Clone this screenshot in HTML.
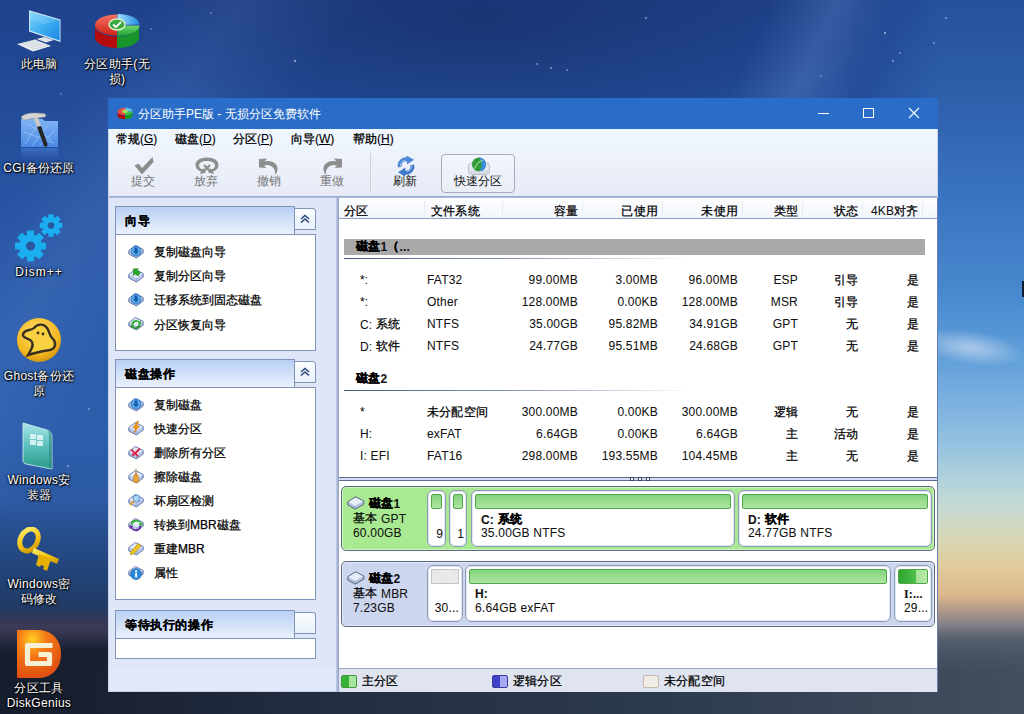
<!DOCTYPE html>
<html><head><meta charset="utf-8">
<style>
*{margin:0;padding:0;box-sizing:border-box}
html,body{width:1024px;height:714px;overflow:hidden}
body{position:relative;font-family:"Liberation Sans",sans-serif;font-size:12px;color:#111;
background:#1f3f7e}
.a{position:absolute}
#bg{left:0;top:0;width:1024px;height:714px;
background:
 radial-gradient(ellipse 380px 140px at 480px 20px,rgba(12,22,60,.32),rgba(12,22,60,0)),
 linear-gradient(115deg,rgba(120,160,230,0) 0,rgba(120,160,230,0) 700px,rgba(140,180,240,.22) 760px,rgba(120,160,230,0) 820px),
 linear-gradient(125deg,rgba(120,160,230,0) 0,rgba(120,160,230,0) 120px,rgba(130,170,240,.12) 200px,rgba(120,160,230,0) 300px),
 linear-gradient(180deg,#1f428c 0,#25509e 150px,#2a5aa8 300px,#2c5eac 430px,#2c5aa4 500px,#264c8a 540px,#214274 580px,#233a64 608px,#34385a 620px,#3c3a54 628px,#2c3046 638px,#1a2032 650px,#161d2c 714px);}
#bgr{left:850px;top:0;width:174px;height:714px;
-webkit-mask-image:linear-gradient(90deg,transparent 0,#000 88px);
background:linear-gradient(180deg,#25509c 0,#2d5eaa 90px,#3a74c0 200px,#4a8ad0 300px,#62a0da 360px,#7ab0e0 400px,#94c2e0 444px,#b2d2dc 480px,#c8dad0 510px,#d8d6b4 540px,#e0cc9c 565px,#dcb88c 595px,#b09a88 610px,#828088 625px,#56606e 638px,#4c5a6a 650px,#44525f 680px,#3a4854 714px)}
#bgb{left:0;top:645px;width:1024px;height:69px;-webkit-mask-image:linear-gradient(180deg,transparent 0,#000 30px);background:linear-gradient(90deg,#161d2c 0,#1a2232 110px,#222c40 300px,#2c3a4e 650px,#3a4858 900px,#424f5c 1024px)}
.dt{position:absolute;width:80px;text-align:center;color:#fff;font-size:12px;line-height:15px;letter-spacing:.3px;
text-shadow:1px 1px 1px #000,0 0 3px #000,0 0 2px #000}
#win{left:108px;top:98px;width:830px;height:594px;background:#e2e8f8;border:1px solid #c8d4ea}
#title{left:108px;top:98px;width:830px;height:31px;background:#2a6dc9}
#ttext{left:138px;top:106px;color:#fff;font-size:12px;white-space:nowrap}
#menu{left:109px;top:129px;width:828px;height:21px;background:#eef5fc}
.mi{position:absolute;top:131px;font-size:12px;white-space:nowrap;color:#000;-webkit-text-stroke:.1px #000}
#tb{left:109px;top:150px;width:828px;height:46px;background:linear-gradient(180deg,#eef3fb,#e6ebf7)}
#tbline{left:109px;top:196px;width:828px;height:2px;background:linear-gradient(180deg,#8ea6cc,#b4c4dc)}
.tl{position:absolute;top:173px;font-size:12px;color:#777;white-space:nowrap}
#left{left:109px;top:198px;width:228px;height:470px;background:#dfe6f8}
#vdiv{left:336px;top:198px;width:3px;height:494px;background:linear-gradient(90deg,#c5cde6,#8f9fc3)}
.pnl{position:absolute;left:115px;width:201px;background:#fffffd;border:1px solid #8094b8}
.ph{position:absolute;left:115px;width:180px;height:29px;border:1px solid #8094b8;border-bottom:none;
background:linear-gradient(180deg,#b9d0f5 0,#cfdff8 45%,#edf3fd 100%)}
.phb{position:absolute;left:294px;width:22px;height:22px;border:1px solid #8094b8;border-radius:0 3px 0 0;background:linear-gradient(180deg,#fbfdff,#e8f1fb)}
.pt{position:absolute;left:125px;font-weight:bold;font-size:12px;letter-spacing:.6px;color:#000;-webkit-text-stroke:.15px #000}
.it{position:absolute;left:154px;font-size:12px;white-space:nowrap;color:#000;-webkit-text-stroke:.25px #000}
.ic{position:absolute;left:128px;width:16px;height:16px}
#right{left:339px;top:198px;width:598px;height:470px;background:#fff}
#hdr{left:339px;top:198px;width:598px;height:21px;background:linear-gradient(180deg,#fdfdfe,#f2f5fb);border-bottom:1px solid #8ea2c8}
.hs{position:absolute;top:201px;width:2px;height:17px;background:linear-gradient(90deg,#dfe5ef,#fff)}
.h{position:absolute;top:203px;font-size:12px;white-space:nowrap;color:#111;-webkit-text-stroke:.05px #000;letter-spacing:.2px}
.c{position:absolute;font-size:12px;white-space:nowrap;color:#111;-webkit-text-stroke:.05px #000;letter-spacing:.2px}
.r{text-align:right}
#status{left:339px;top:668px;width:598px;height:24px;background:#dfe4f0;border-top:1px solid #90a4c8}
.dk{position:absolute;border:1px solid #5c6a80;border-radius:5px;box-shadow:inset 0 0 0 1px rgba(255,255,255,.45)}
.pb{position:absolute;background:#fff;border:1px solid #8e9ab4;border-radius:6px;box-shadow:inset 0 0 0 1px #dfe8f6}
.gb{position:absolute;left:3px;right:3px;top:3px;height:15px;border:1px solid #4ea84a;border-radius:2px;background:linear-gradient(180deg,#84d47e,#b0e4a2)}
.ub{position:absolute;left:3px;right:3px;top:3px;height:15px;border:1px solid #c4c4c4;background:repeating-linear-gradient(45deg,#e2e2e2 0,#e2e2e2 1px,#ececec 1px,#ececec 3px)}
.hd{position:absolute;width:16px;height:14px}
.h .k{top:0 !important}
.k{-webkit-text-stroke:.25px #000;color:#000;position:relative;top:-1px}
.km{-webkit-text-stroke:.3px #000}
</style></head><body>
<div id="bg" class="a"></div>
<div id="bgr" class="a"></div>
<div id="bgb" class="a"></div>
<div class="a" style="left:294px;top:60px;width:2px;height:2px;border-radius:50%;background:rgba(255,255,255,0.63)"></div><div class="a" style="left:536px;top:63px;width:1.5px;height:1.5px;border-radius:50%;background:rgba(255,255,255,0.42)"></div><div class="a" style="left:550px;top:67px;width:1.5px;height:1.5px;border-radius:50%;background:rgba(255,255,255,0.42)"></div><div class="a" style="left:566px;top:69px;width:1.5px;height:1.5px;border-radius:50%;background:rgba(255,255,255,0.35)"></div><div class="a" style="left:645px;top:17px;width:1.5px;height:1.5px;border-radius:50%;background:rgba(255,255,255,0.42)"></div><div class="a" style="left:884px;top:32px;width:2px;height:2px;border-radius:50%;background:rgba(255,255,255,0.63)"></div><div class="a" style="left:892px;top:60px;width:1.5px;height:1.5px;border-radius:50%;background:rgba(255,255,255,0.42)"></div><div class="a" style="left:899px;top:52px;width:1.5px;height:1.5px;border-radius:50%;background:rgba(255,255,255,0.35)"></div><div class="a" style="left:945px;top:17px;width:1.5px;height:1.5px;border-radius:50%;background:rgba(255,255,255,0.42)"></div><div class="a" style="left:933px;top:42px;width:1.5px;height:1.5px;border-radius:50%;background:rgba(255,255,255,0.35)"></div><div class="a" style="left:820px;top:75px;width:1.5px;height:1.5px;border-radius:50%;background:rgba(255,255,255,0.28)"></div><div class="a" style="left:60px;top:93px;width:1.5px;height:1.5px;border-radius:50%;background:rgba(255,255,255,0.28)"></div><div class="a" style="left:150px;top:28px;width:1.5px;height:1.5px;border-radius:50%;background:rgba(255,255,255,0.28)"></div><div class="a" style="left:210px;top:12px;width:1.5px;height:1.5px;border-radius:50%;background:rgba(255,255,255,0.28)"></div><div class="a" style="left:35px;top:272px;width:1.5px;height:1.5px;border-radius:50%;background:rgba(255,255,255,0.28)"></div><div class="a" style="left:88px;top:408px;width:1.5px;height:1.5px;border-radius:50%;background:rgba(255,255,255,0.35)"></div><div class="a" style="left:67px;top:465px;width:1.5px;height:1.5px;border-radius:50%;background:rgba(255,255,255,0.42)"></div><div class="a" style="left:50px;top:640px;width:1.5px;height:1.5px;border-radius:50%;background:rgba(255,255,255,0.28)"></div>
<div class="a" style="left:925px;top:325px;width:110px;height:50px;background:radial-gradient(ellipse 55px 17px at 45px 24px,rgba(225,232,245,.6),rgba(225,232,245,0));transform:rotate(8deg)"></div>
<div class="a" style="left:1022px;top:281px;width:2px;height:16px;background:#101a30"></div>

<!-- desktop icons -->
<svg class="a" style="left:14px;top:8px" width="50" height="46" viewBox="0 0 50 46">
<defs><linearGradient id="scr" x1="0" y1="0" x2="1" y2="1"><stop offset="0" stop-color="#7ad4fa"/><stop offset=".55" stop-color="#3aaaf0"/><stop offset="1" stop-color="#1a88e0"/></linearGradient></defs>
<path d="M15 2.2 L46.5 11.5 L46.5 34 L15 23.5 Z" fill="#d8ecf8"/>
<path d="M15.8 3.5 L45.7 12.3 L45.7 32.6 L15.8 22.5 Z" fill="url(#scr)"/>
<path d="M15.8 3.5 L45.7 12.3 L30 16 L15.8 12 Z" fill="#ffffff" opacity=".12"/>
<path d="M22.5 31 L30 29 L40 32 L32 34.5 Z" fill="#dfe4e8"/>
<path d="M3 36 L21 31.5 L37 38 L19 43.5 Z" fill="#eef2f4"/>
<path d="M6 36 L22 32 M9 37.3 L25 33.3 M12 38.6 L28 34.6 M15 40 L31 36 M18 41.4 L34 37.4" stroke="#b0bac4" stroke-width=".6"/>
</svg>
<svg class="a" style="left:94px;top:12px" width="46" height="38" viewBox="0 0 46 38">
<defs>
<linearGradient id="pr" x1="0" y1="0" x2="0" y2="1"><stop offset="0" stop-color="#f47060"/><stop offset="1" stop-color="#d02418"/></linearGradient>
<linearGradient id="pg" x1="0" y1="0" x2="0" y2="1"><stop offset="0" stop-color="#70d870"/><stop offset="1" stop-color="#20a030"/></linearGradient>
<linearGradient id="pbl" x1="0" y1="0" x2="1" y2="0"><stop offset="0" stop-color="#a0e0ff"/><stop offset="1" stop-color="#2088e0"/></linearGradient>
</defs>
<path d="M1 14 A22 10.5 0 0 0 23 24.5 L23 36 A22 10.5 0 0 1 1 25.5 Z" fill="#b40c0c"/>
<path d="M23 24.5 A22 10.5 0 0 0 45 14 L45 25.5 A22 10.5 0 0 1 23 36 Z" fill="#18962a"/>
<path d="M23 13 L23 2.5 A22 10.5 0 0 0 1 13 A22 10.5 0 0 0 23 23.5 Z" fill="url(#pr)"/>
<path d="M23.5 13 L23.5 2 A22 10.5 0 0 1 45.5 12.5 Z" fill="url(#pbl)"/>
<path d="M23.5 13.5 L45.5 13.5 A22 10.5 0 0 1 23.5 24 Z" fill="url(#pg)"/>
<ellipse cx="23" cy="12.5" rx="8" ry="5.5" fill="#3aa83a" stroke="#e0f4d0" stroke-width="1.3"/>
<path d="M19 12.5 L22 15 L27 10" stroke="#fff" stroke-width="1.8" fill="none"/>
</svg>
<svg class="a" style="left:18px;top:110px" width="44" height="50" viewBox="0 0 44 50">
<defs><linearGradient id="cg" x1="0" y1="0" x2="0" y2="1"><stop offset="0" stop-color="#80b4f4"/><stop offset="1" stop-color="#4a88e4"/></linearGradient>
<linearGradient id="cr" x1="0" y1="0" x2="0" y2="1"><stop offset="0" stop-color="#4a86e0" stop-opacity=".5"/><stop offset="1" stop-color="#4a86e0" stop-opacity="0"/></linearGradient></defs>
<path d="M3 9 L24 9 L27 11 L40 11 L40 37 L3 37 Z" fill="url(#cg)"/>
<path d="M7 34 L20 14 M14 36 L30 15 M22 35 L37 20 M6 22 L36 33 M10 14 L34 30" stroke="#c0dafa" stroke-width=".6" opacity=".8"/>
<rect x="3" y="38" width="37" height="12" fill="url(#cr)"/>
<path d="M3 7 C6 4 12 2.5 18 3 L26 3.5 C28 4 28.5 6 27 7 L20 8 C15 8.5 11 9 8 10 C6 10.5 4 9 3 7 Z" fill="#d4d4d4" stroke="#8a8a8a" stroke-width=".5"/>
<path d="M15.5 8.5 L20 7.5 L23 16 L19 17 Z" fill="#c8c8c8"/>
<path d="M19 17 L23 16 L29.5 34 C30 36.5 27.5 37.5 26 36 Z" fill="#262626"/>
</svg>
<svg class="a" style="left:13px;top:212px" width="52" height="50" viewBox="0 0 52 50">
<g fill="#1aaef0">
<g transform="translate(17.5 34)">
<circle r="11.5"/>
<rect x="-3.6" y="-15.5" width="7.2" height="31" rx="1"/>
<rect x="-3.6" y="-15.5" width="7.2" height="31" rx="1" transform="rotate(45)"/>
<rect x="-3.6" y="-15.5" width="7.2" height="31" rx="1" transform="rotate(90)"/>
<rect x="-3.6" y="-15.5" width="7.2" height="31" rx="1" transform="rotate(135)"/>
</g>
<g transform="translate(38 13.5)">
<circle r="8.5"/>
<rect x="-2.7" y="-11.3" width="5.4" height="22.6" rx=".8"/>
<rect x="-2.7" y="-11.3" width="5.4" height="22.6" rx=".8" transform="rotate(45)"/>
<rect x="-2.7" y="-11.3" width="5.4" height="22.6" rx=".8" transform="rotate(90)"/>
<rect x="-2.7" y="-11.3" width="5.4" height="22.6" rx=".8" transform="rotate(135)"/>
</g>
</g>
<circle cx="17.5" cy="34" r="4.5" fill="#2a56a0"/>
<circle cx="38" cy="13.5" r="3.3" fill="#2a56a0"/>
</svg>
<svg class="a" style="left:16px;top:317px" width="46" height="46" viewBox="0 0 46 46">
<defs><radialGradient id="gy" cx=".45" cy=".35" r=".7"><stop offset="0" stop-color="#ffe070"/><stop offset=".7" stop-color="#f4b820"/><stop offset="1" stop-color="#c88a10"/></radialGradient></defs>
<circle cx="23" cy="23" r="22" fill="url(#gy)"/>
<path d="M7 17 C9 12 15 14 18 11 C21 7 28 6 31 11 C34 15 33 19 37 22 C41 26 39 32 34 33 C28 34 21 35 12 38 C15 33 18 29 16 25 C14 21 6 22 7 17 Z" fill="#f8d040" stroke="#3a3020" stroke-width="2.4"/>
<circle cx="22" cy="16" r="1.4" fill="#3a3020"/><circle cx="27" cy="17" r="1.4" fill="#3a3020"/>
</svg>
<svg class="a" style="left:21px;top:421px" width="34" height="50" viewBox="0 0 34 50">
<defs><linearGradient id="wi" x1="0" y1="0" x2="0" y2="1"><stop offset="0" stop-color="#a8e4e8"/><stop offset=".5" stop-color="#5cc0bc"/><stop offset="1" stop-color="#2a9a8a"/></linearGradient></defs>
<path d="M2 2 L26 9 C29 10 31 12 31 15 L31 48 L5 43 C3 42.5 2 41 2 39 Z" fill="url(#wi)" stroke="#d8f4f4" stroke-width=".8"/>
<path d="M26 9 C29 10 31 12 31 15 L31 48 L28 47 L28 14 C28 12 27.5 10 26 9Z" fill="#2a8880" opacity=".6"/>
<g fill="#e4f6f6" opacity=".85"><rect x="9" y="13" width="6" height="5"/><rect x="16" y="14" width="6" height="5"/><rect x="9" y="19" width="6" height="5"/><rect x="16" y="20" width="6" height="5"/></g>
</svg>
<svg class="a" style="left:17px;top:527px" width="45" height="46" viewBox="0 0 45 46">
<defs><linearGradient id="ky" x1="0" y1="0" x2="1" y2="1"><stop offset="0" stop-color="#fff070"/><stop offset=".6" stop-color="#f0c010"/><stop offset="1" stop-color="#c89000"/></linearGradient></defs>
<g transform="rotate(28 12 13)"><ellipse cx="12" cy="13" rx="8.5" ry="11.5" fill="none" stroke="url(#ky)" stroke-width="5"/></g>
<path d="M17 21 L42 32 L40 37 L15 26 Z" fill="url(#ky)"/>
<path d="M22 27 L34 32 L30 44 L26 42 L27 39 L24 38 L23 40 L19 38 Z" fill="#e8b000"/>
</svg>
<svg class="a" style="left:16px;top:629px" width="46" height="50" viewBox="0 0 46 50">
<defs><radialGradient id="dg" cx=".35" cy=".2" r=".8"><stop offset="0" stop-color="#ffd020"/><stop offset=".4" stop-color="#f47a18"/><stop offset="1" stop-color="#e05010"/></radialGradient></defs>
<path d="M1 1 L22 1 C36 1 45 11 45 25 C45 39 36 49 22 49 L1 49 Z" fill="url(#dg)"/>
<path d="M36.5 16.5 L11.5 16.5 L11.5 34.5 L33.5 34.5 L33.5 25.5 L22.5 25.5" stroke="#f8f0d4" stroke-width="5.2" stroke-linejoin="round" fill="none"/>
</svg>
<!-- desktop icons text -->
<div class="dt" style="left:-1px;top:57px">此电脑</div>
<div class="dt" style="left:77px;top:57px">分区助手(无<br>损)</div>
<div class="dt" style="left:-1px;top:161px">CGI备份还原</div>
<div class="dt" style="left:-1px;top:265px;letter-spacing:1px">Dism++</div>
<div class="dt" style="left:-1px;top:369px">Ghost备份还<br>原</div>
<div class="dt" style="left:-1px;top:473px">Windows安<br>装器</div>
<div class="dt" style="left:-1px;top:577px">Windows密<br>码修改</div>
<div class="dt" style="left:-1px;top:681px">分区工具<br>DiskGenius</div>

<div id="win" class="a"></div>
<div id="title" class="a"></div>
<div id="ttext" class="a">分区助手PE版 - 无损分区免费软件</div>
<!-- title controls -->
<div class="a" style="left:818px;top:113px;width:11px;height:1px;background:#fff"></div>
<div class="a" style="left:863px;top:108px;width:11px;height:10px;border:1px solid #fff"></div>
<svg class="a" style="left:908px;top:107px" width="12" height="12" viewBox="0 0 12 12"><path d="M1 1L11 11M11 1L1 11" stroke="#fff" stroke-width="1.1"/></svg>
<!-- title icon -->
<svg class="a" style="left:117px;top:107px" width="16" height="13" viewBox="0 0 46 38">
<path d="M1 14 A22 10.5 0 0 0 23 24.5 L23 36 A22 10.5 0 0 1 1 25.5 Z" fill="#b40c0c"/>
<path d="M23 24.5 A22 10.5 0 0 0 45 14 L45 25.5 A22 10.5 0 0 1 23 36 Z" fill="#18962a"/>
<path d="M23 13 L23 2.5 A22 10.5 0 0 0 1 13 A22 10.5 0 0 0 23 23.5 Z" fill="#e84a3c"/>
<path d="M23.5 13 L23.5 2 A22 10.5 0 0 1 45.5 12.5 Z" fill="#60c0f0"/>
<path d="M23.5 13.5 L45.5 13.5 A22 10.5 0 0 1 23.5 24 Z" fill="#40c048"/>
<ellipse cx="23" cy="12.5" rx="8" ry="5.5" fill="#a8e060"/>
</svg>
<div id="menu" class="a"></div>
<div class="mi" style="left:116px"><span class="km">常规</span>(<u>G</u>)</div>
<div class="mi" style="left:175px"><span class="km">磁盘</span>(<u>D</u>)</div>
<div class="mi" style="left:233px"><span class="km">分区</span>(<u>P</u>)</div>
<div class="mi" style="left:291px"><span class="km">向导</span>(<u>W</u>)</div>
<div class="mi" style="left:353px"><span class="km">帮助</span>(<u>H</u>)</div>
<div id="tb" class="a"></div>
<div id="tbline" class="a"></div>
<!-- toolbar icons -->
<svg class="a" style="left:133px;top:156px" width="22" height="20" viewBox="0 0 22 20">
<path d="M1.5 9.5 L5.5 7.5 L9 12 L19.5 1 L20.5 6 L9 18.5 Z" fill="#8c8c8c"/>
</svg>
<svg class="a" style="left:194px;top:156px" width="26" height="19" viewBox="0 0 26 19">
<path d="M13 1.5 C6 1.5 1.5 4.5 1.5 9 C1.5 12 3.5 14.5 7 15.5 L6 18 L12 16.5 L9.5 12 L8.5 13.5 C6 12.5 5 11 5 9.5 C5 6.5 8.5 5 13 5 C17.5 5 21 6.5 21 9.5 C21 11 20 12.5 17.5 13.5 L16.5 12 L14 16.5 L20 18 L19 15.5 C22.5 14.5 24.5 12 24.5 9 C24.5 4.5 20 1.5 13 1.5 Z" fill="#8e8e8e"/>
<path d="M10 9 L16 15 M16 9 L10 15" stroke="#8e8e8e" stroke-width="2.2"/>
</svg>
<svg class="a" style="left:258px;top:157px" width="22" height="19" viewBox="0 0 22 19">
<path d="M1 2 L9 1.5 L6.5 4.5 C13 3 19 6 19.5 11 C19.8 14 18.5 16.5 17 18 C17.5 15.5 17 11.5 13 9 C10.5 7.5 8 8 6 8.8 L8.5 11 L1 10.5 Z" fill="#8e8e8e"/>
</svg>
<svg class="a" style="left:321px;top:157px" width="22" height="19" viewBox="0 0 22 19">
<path d="M21 2 L13 1.5 L15.5 4.5 C9 3 3 6 2.5 11 C2.2 14 3.5 16.5 5 18 C4.5 15.5 5 11.5 9 9 C11.5 7.5 14 8 16 8.8 L13.5 11 L21 10.5 Z" fill="#8e8e8e"/>
</svg>
<div class="a" style="left:370px;top:153px;width:2px;height:39px;background:linear-gradient(90deg,#b9c3d3,#fff)"></div>
<svg class="a" style="left:396px;top:156px" width="20" height="20" viewBox="0 0 20 20">
<path d="M3.8 11 A6.3 6.3 0 0 1 12 3.6" stroke="#4f8ad8" stroke-width="4" fill="none"/>
<path d="M10.5 -0.5 L18 3.8 L11 8.5 Z" fill="#4f8ad8"/>
<path d="M16.2 9 A6.3 6.3 0 0 1 8 16.4" stroke="#3f78c8" stroke-width="4" fill="none"/>
<path d="M9.5 11.5 L2 16.2 L9 20.5 Z" fill="#3f78c8"/>
<path d="M4.5 10 A5.5 5.5 0 0 1 9 4.5 M15.5 10 A5.5 5.5 0 0 1 11 15.5" stroke="#a8ccf4" stroke-width="1" fill="none"/>
</svg>
<div class="a" style="left:441px;top:154px;width:74px;height:39px;border:1px solid #a4adbd;border-radius:4px;background:linear-gradient(180deg,#f3f5fb,#e9edf6)"></div>
<svg class="a" style="left:467px;top:156px" width="24" height="20" viewBox="0 0 24 20">
<path d="M1.5 10 Q1.5 7 4.5 7 L19.5 7 Q22.5 7 22.5 10 L22.5 15.5 Q22.5 18.5 19.5 18.5 L4.5 18.5 Q1.5 18.5 1.5 15.5 Z" fill="#e4e8ee" stroke="#b8bfca" stroke-width="1"/>
<circle cx="12" cy="8.5" r="7" fill="#2e9a38"/>
<path d="M12 1.5 A7 7 0 0 1 19 8.5 A7 7 0 0 1 12 15.5 C16 12 15 5 12 1.5Z" fill="#3a90e0"/>
<path d="M7.5 13 Q10 6 16 4" stroke="#9ad880" stroke-width="1.2" fill="none"/>
<path d="M2 14 Q12 17 22 14 L22 15.5 Q22 18 19.5 18 L4.5 18 Q2 18 2 15.5 Z" fill="#d4d9e2"/>
</svg>
<div class="tl" style="left:131px">提交</div>
<div class="tl" style="left:194px">放弃</div>
<div class="tl" style="left:257px">撤销</div>
<div class="tl" style="left:320px">重做</div>
<div class="tl" style="left:393px;color:#111">刷新</div>
<div class="tl" style="left:454px;color:#111">快速分区</div>

<div id="left" class="a"></div>
<div id="right" class="a"></div>
<div id="vdiv" class="a"></div>

<!-- panel 1 -->
<div class="ph" style="top:206px"></div>
<div class="phb" style="top:208px"></div>
<div class="pnl" style="top:234px;height:117px"></div>
<div class="pt" style="top:213px">向导</div>
<div class="it" style="top:244px">复制磁盘向导</div>
<div class="it" style="top:268px">复制分区向导</div>
<div class="it" style="top:292px">迁移系统到固态磁盘</div>
<div class="it" style="top:317px">分区恢复向导</div>

<!-- panel 2 -->
<div class="ph" style="top:359px"></div>
<div class="phb" style="top:361px"></div>
<div class="pnl" style="top:387px;height:213px"></div>
<div class="pt" style="top:366px">磁盘操作</div>
<div class="it" style="top:397px">复制磁盘</div>
<div class="it" style="top:421px">快速分区</div>
<div class="it" style="top:445px">删除所有分区</div>
<div class="it" style="top:469px">擦除磁盘</div>
<div class="it" style="top:493px">坏扇区检测</div>
<div class="it" style="top:517px">转换到MBR磁盘</div>
<div class="it" style="top:541px">重建MBR</div>
<div class="it" style="top:565px">属性</div>

<!-- panel 3 -->
<div class="ph" style="top:610px"></div>
<div class="phb" style="top:612px"></div>
<div class="pnl" style="top:638px;height:21px"></div>
<div class="pt" style="top:617px">等待执行的操作</div>

<svg width="0" height="0" style="position:absolute">
<defs>
<g id="dsk">
<path d="M0.8 7.5 L7.5 2.5 L15.2 6.5 L15.2 10 L8.5 15 L0.8 11 Z" fill="#b4c4e6" stroke="#6a7cb0" stroke-width="1"/>
<path d="M1.4 7.6 L7.5 3.2 L14.6 6.7 L8.5 11.2 Z" fill="#e4ecfa"/>
<path d="M8.5 11.2 L8.5 14.4" stroke="#8a9ccc" stroke-width=".7"/>
</g>
</defs></svg>
<svg class="a" style="left:128px;top:243px" width="16" height="16" viewBox="0 0 16 16"><use href="#dsk"/><circle cx="8" cy="8" r="5" fill="#5aa8e8" stroke="#2a70c0" stroke-width=".8"/><path d="M6.5 4.5 L9.5 4.5 L9.5 8 L11 8 L8 11.5 L5 8 L6.5 8 Z" fill="#1a5cb0"/></svg>
<svg class="a" style="left:128px;top:267px" width="16" height="16" viewBox="0 0 16 16"><use href="#dsk"/><path d="M4 4 L8 1 L8 3 L12 3 L12 7 L8 7 L8 9.5 Z" fill="#2aa82a" stroke="#167a16" stroke-width=".5" transform="rotate(35 8 5)"/></svg>
<svg class="a" style="left:128px;top:291px" width="16" height="16" viewBox="0 0 16 16"><use href="#dsk"/><circle cx="8" cy="8" r="5" fill="#5aa8e8" stroke="#2a70c0" stroke-width=".8"/><path d="M6.5 4.5 L9.5 4.5 L9.5 8 L11 8 L8 11.5 L5 8 L6.5 8 Z" fill="#1a5cb0"/></svg>
<svg class="a" style="left:128px;top:315px" width="16" height="16" viewBox="0 0 16 16"><use href="#dsk"/><path d="M3.5 9 A4.5 4 0 0 1 11.5 6.5 L13 5.5 L13 9.5 L9.5 8.5 L10.8 7.8 A3 2.7 0 0 0 5.5 9.5 Z" fill="#34b034"/><path d="M12.5 10 A4.5 4 0 0 1 4.5 12.5 L3 13.5 L3 9.5 L6.5 10.5 L5.2 11.2 A3 2.7 0 0 0 10.5 9.5 Z" fill="#2a9a2a"/></svg>
<svg class="a" style="left:128px;top:396px" width="16" height="16" viewBox="0 0 16 16"><use href="#dsk"/><circle cx="8" cy="8" r="5" fill="#5aa8e8" stroke="#2a70c0" stroke-width=".8"/><path d="M6.5 4.5 L9.5 4.5 L9.5 8 L11 8 L8 11.5 L5 8 L6.5 8 Z" fill="#1a5cb0"/></svg>
<svg class="a" style="left:128px;top:420px" width="16" height="16" viewBox="0 0 16 16"><use href="#dsk"/><path d="M9.5 1 L5 8 L8 8 L6 13 L11.5 6 L8.5 6 L10.5 1 Z" fill="#f5a010" stroke="#c86a00" stroke-width=".6"/></svg>
<svg class="a" style="left:128px;top:444px" width="16" height="16" viewBox="0 0 16 16"><use href="#dsk"/><path d="M4 5 L7 8 L11 4 L12.5 5.5 L8.5 9.5 L11 12 L9.5 13 L7 10.5 L5 12.5 L3.5 11 L5.5 9 L2.5 6.5 Z" fill="#e0204a"/></svg>
<svg class="a" style="left:128px;top:468px" width="16" height="16" viewBox="0 0 16 16"><use href="#dsk"/><path d="M7.5 0.5 L8.5 0.5 L9 7 L7 7 Z" fill="#c89850"/><path d="M6 7 L10 7 L11 14 L5 14 Z" fill="#e8a838" stroke="#b07010" stroke-width=".5"/></svg>
<svg class="a" style="left:128px;top:492px" width="16" height="16" viewBox="0 0 16 16"><use href="#dsk"/><circle cx="8.5" cy="6.5" r="3.5" fill="#a8d4f4" stroke="#5a8ac8" stroke-width="1"/><path d="M6 9 L2 13" stroke="#e8a030" stroke-width="1.8"/></svg>
<svg class="a" style="left:128px;top:516px" width="16" height="16" viewBox="0 0 16 16"><use href="#dsk"/><path d="M3 8.5 A5 4 0 0 1 13 7 L14.5 6 L14 10 L10.5 8.8 L12 8 A3.5 2.8 0 0 0 5 9 Z" fill="#34b034"/><path d="M13 10 A5 4 0 0 1 3 12 L1.5 13 L2 9 L5.5 10.2 L4 11 A3.5 2.8 0 0 0 11 10 Z" fill="#6a2aa0"/></svg>
<svg class="a" style="left:128px;top:540px" width="16" height="16" viewBox="0 0 16 16"><use href="#dsk"/><path d="M3 11.5 L10.5 3.5 L13 6 L5.5 14 L2.5 14.5 Z" fill="#f0c820" stroke="#a88000" stroke-width=".7"/></svg>
<svg class="a" style="left:128px;top:564px" width="16" height="16" viewBox="0 0 16 16"><use href="#dsk"/><circle cx="8" cy="10" r="5.5" fill="#2a88d8" stroke="#1a60b0" stroke-width=".6"/><rect x="7.2" y="9" width="1.8" height="4.5" fill="#fff"/><circle cx="8.1" cy="7.3" r="1.1" fill="#fff"/></svg>
<svg class="a" style="left:299px;top:214px" width="12" height="10" viewBox="0 0 12 10"><path d="M2 5 L6 1.5 L10 5 M2 8.5 L6 5 L10 8.5" stroke="#2a4a78" stroke-width="1.6" fill="none"/></svg>
<svg class="a" style="left:299px;top:367px" width="12" height="10" viewBox="0 0 12 10"><path d="M2 5 L6 1.5 L10 5 M2 8.5 L6 5 L10 8.5" stroke="#2a4a78" stroke-width="1.6" fill="none"/></svg>
<!-- list header -->
<div id="hdr" class="a"></div>
<div class="hs" style="left:424px"></div><div class="hs" style="left:502px"></div><div class="hs" style="left:582px"></div><div class="hs" style="left:662px"></div><div class="hs" style="left:742px"></div><div class="hs" style="left:802px"></div><div class="hs" style="left:862px"></div><div class="hs" style="left:922px"></div>
<div class="h" style="left:344px"><span class="k">分区</span></div>
<div class="h" style="left:431px"><span class="k">文件系统</span></div>
<div class="h r" style="left:500px;width:78px"><span class="k">容量</span></div>
<div class="h r" style="left:580px;width:78px"><span class="k">已使用</span></div>
<div class="h r" style="left:660px;width:78px"><span class="k">未使用</span></div>
<div class="h r" style="left:740px;width:58px"><span class="k">类型</span></div>
<div class="h r" style="left:800px;width:58px"><span class="k">状态</span></div>
<div class="h" style="left:871px">4KB<span class="k">对齐</span></div>

<!-- list -->
<div class="a" style="left:344px;top:239px;width:581px;height:16px;background:#a9a9a9"></div>
<div class="c" style="left:356px;top:239px;font-weight:bold"><span class="k">磁盘</span>1<span class="k">（</span>...</div>
<div class="a" style="left:344px;top:258px;width:581px;height:1px;background:linear-gradient(90deg,#44587c 0,#8a98b4 30%,#d8dde8 50%,rgba(255,255,255,0) 60%)"></div>
<div class="c" style="left:360px;top:273px">*:</div>
<div class="c" style="left:427px;top:273px">FAT32</div>
<div class="c r" style="left:498px;width:80px;top:273px">99.00MB</div>
<div class="c r" style="left:578px;width:80px;top:273px">3.00MB</div>
<div class="c r" style="left:658px;width:80px;top:273px">96.00MB</div>
<div class="c r" style="left:738px;width:60px;top:273px">ESP</div>
<div class="c r" style="left:798px;width:60px;top:273px"><span class="k">引导</span></div>
<div class="c r" style="left:858px;width:61px;top:273px"><span class="k">是</span></div>
<div class="c" style="left:360px;top:295px">*:</div>
<div class="c" style="left:427px;top:295px">Other</div>
<div class="c r" style="left:498px;width:80px;top:295px">128.00MB</div>
<div class="c r" style="left:578px;width:80px;top:295px">0.00KB</div>
<div class="c r" style="left:658px;width:80px;top:295px">128.00MB</div>
<div class="c r" style="left:738px;width:60px;top:295px">MSR</div>
<div class="c r" style="left:798px;width:60px;top:295px"><span class="k">引导</span></div>
<div class="c r" style="left:858px;width:61px;top:295px"><span class="k">是</span></div>
<div class="c" style="left:360px;top:317px">C: <span class="k">系统</span></div>
<div class="c" style="left:427px;top:317px">NTFS</div>
<div class="c r" style="left:498px;width:80px;top:317px">35.00GB</div>
<div class="c r" style="left:578px;width:80px;top:317px">95.82MB</div>
<div class="c r" style="left:658px;width:80px;top:317px">34.91GB</div>
<div class="c r" style="left:738px;width:60px;top:317px">GPT</div>
<div class="c r" style="left:798px;width:60px;top:317px"><span class="k">无</span></div>
<div class="c r" style="left:858px;width:61px;top:317px"><span class="k">是</span></div>
<div class="c" style="left:360px;top:339px">D: <span class="k">软件</span></div>
<div class="c" style="left:427px;top:339px">NTFS</div>
<div class="c r" style="left:498px;width:80px;top:339px">24.77GB</div>
<div class="c r" style="left:578px;width:80px;top:339px">95.51MB</div>
<div class="c r" style="left:658px;width:80px;top:339px">24.68GB</div>
<div class="c r" style="left:738px;width:60px;top:339px">GPT</div>
<div class="c r" style="left:798px;width:60px;top:339px"><span class="k">无</span></div>
<div class="c r" style="left:858px;width:61px;top:339px"><span class="k">是</span></div>
<div class="c" style="left:356px;top:371px;font-weight:bold"><span class="k">磁盘</span>2</div>
<div class="a" style="left:344px;top:390px;width:581px;height:1px;background:linear-gradient(90deg,#44587c 0,#8a98b4 30%,#d8dde8 50%,rgba(255,255,255,0) 60%)"></div>
<div class="c" style="left:360px;top:405px">*</div>
<div class="c" style="left:427px;top:405px"><span class="k">未分配空间</span></div>
<div class="c r" style="left:498px;width:80px;top:405px">300.00MB</div>
<div class="c r" style="left:578px;width:80px;top:405px">0.00KB</div>
<div class="c r" style="left:658px;width:80px;top:405px">300.00MB</div>
<div class="c r" style="left:738px;width:60px;top:405px"><span class="k">逻辑</span></div>
<div class="c r" style="left:798px;width:60px;top:405px"><span class="k">无</span></div>
<div class="c r" style="left:858px;width:61px;top:405px"><span class="k">是</span></div>
<div class="c" style="left:360px;top:427px">H:</div>
<div class="c" style="left:427px;top:427px">exFAT</div>
<div class="c r" style="left:498px;width:80px;top:427px">6.64GB</div>
<div class="c r" style="left:578px;width:80px;top:427px">0.00KB</div>
<div class="c r" style="left:658px;width:80px;top:427px">6.64GB</div>
<div class="c r" style="left:738px;width:60px;top:427px"><span class="k">主</span></div>
<div class="c r" style="left:798px;width:60px;top:427px"><span class="k">活动</span></div>
<div class="c r" style="left:858px;width:61px;top:427px"><span class="k">是</span></div>
<div class="c" style="left:360px;top:449px">I: EFI</div>
<div class="c" style="left:427px;top:449px">FAT16</div>
<div class="c r" style="left:498px;width:80px;top:449px">298.00MB</div>
<div class="c r" style="left:578px;width:80px;top:449px">193.55MB</div>
<div class="c r" style="left:658px;width:80px;top:449px">104.45MB</div>
<div class="c r" style="left:738px;width:60px;top:449px"><span class="k">主</span></div>
<div class="c r" style="left:798px;width:60px;top:449px"><span class="k">无</span></div>
<div class="c r" style="left:858px;width:61px;top:449px"><span class="k">是</span></div>
<!-- splitter -->
<div class="a" style="left:339px;top:477px;width:598px;height:4px;background:#d4dcf6;border-top:1px solid #5e6c8c;border-bottom:1px solid #5e6c8c"></div>
<div class="a" style="left:630px;top:477px;width:4px;height:4px;border:1px solid #3a4660;background:#fff"></div>
<div class="a" style="left:638px;top:477px;width:4px;height:4px;border:1px solid #3a4660;background:#fff"></div>
<div class="a" style="left:646px;top:477px;width:4px;height:4px;border:1px solid #3a4660;background:#fff"></div>
<!-- disk1 -->
<div class="dk" style="left:341px;top:486px;width:594px;height:65px;background:#a9e991"></div>
<svg class="a" style="left:347px;top:496px" width="18" height="14" viewBox="0 0 18 14"><path d="M0.8 5.8 L8.5 0.8 L16.8 5 L16.8 8.2 L8.2 13.2 L0.8 9 Z" fill="#b0c0de" stroke="#56687c" stroke-width="1"/><path d="M1.5 5.9 L8.5 1.5 L16 5.2 L8.2 10 Z" fill="#e8eef9"/><path d="M8.2 10 L8.2 12.6" stroke="#7888a8" stroke-width=".6"/></svg>
<div class="c" style="left:369px;top:496px;font-weight:bold"><span class="k">磁盘</span>1</div>
<div class="c" style="left:353px;top:511px"><span class="k">基本</span> GPT</div>
<div class="c" style="left:353px;top:526px">60.00GB</div>
<div class="pb" style="left:427px;top:490px;width:19px;height:57px"><div class="gb"></div></div>
<div class="c r" style="left:427px;top:527px;width:16px">9</div>
<div class="pb" style="left:449px;top:490px;width:18px;height:57px"><div class="gb"></div></div>
<div class="c r" style="left:449px;top:527px;width:15px">1</div>
<div class="pb" style="left:471px;top:490px;width:264px;height:57px"><div class="gb"></div></div>
<div class="c" style="left:481px;top:512px;font-weight:bold">C: <span class="k">系统</span></div>
<div class="c" style="left:481px;top:526px">35.00GB NTFS</div>
<div class="pb" style="left:738px;top:490px;width:194px;height:57px"><div class="gb"></div></div>
<div class="c" style="left:748px;top:512px;font-weight:bold">D: <span class="k">软件</span></div>
<div class="c" style="left:748px;top:526px">24.77GB NTFS</div>
<!-- disk2 -->
<div class="dk" style="left:341px;top:561px;width:594px;height:66px;background:#cdd6ef"></div>
<svg class="a" style="left:347px;top:571px" width="18" height="14" viewBox="0 0 18 14"><path d="M0.8 5.8 L8.5 0.8 L16.8 5 L16.8 8.2 L8.2 13.2 L0.8 9 Z" fill="#b0c0de" stroke="#56687c" stroke-width="1"/><path d="M1.5 5.9 L8.5 1.5 L16 5.2 L8.2 10 Z" fill="#e8eef9"/><path d="M8.2 10 L8.2 12.6" stroke="#7888a8" stroke-width=".6"/></svg>
<div class="c" style="left:369px;top:571px;font-weight:bold"><span class="k">磁盘</span>2</div>
<div class="c" style="left:353px;top:586px"><span class="k">基本</span> MBR</div>
<div class="c" style="left:353px;top:601px">7.23GB</div>
<div class="pb" style="left:427px;top:565px;width:36px;height:57px"><div class="ub"></div></div>
<div class="c r" style="left:427px;top:601px;width:32px">30...</div>
<div class="pb" style="left:465px;top:565px;width:426px;height:57px"><div class="gb"></div></div>
<div class="c" style="left:475px;top:587px;font-weight:bold">H:</div>
<div class="c" style="left:475px;top:601px">6.64GB exFAT</div>
<div class="pb" style="left:894px;top:565px;width:38px;height:57px"><div class="gb" style="background:linear-gradient(90deg,#2fa52f 0,#4cc24c 60%,#a6e39a 61%,#b8eaa8 100%)"></div></div>
<div class="c" style="left:904px;top:587px;font-weight:bold;font-family:'Liberation Serif',serif">I:...</div>
<div class="c" style="left:904px;top:601px">29...</div>
<!-- status -->
<div id="status" class="a"></div>
<div class="a" style="left:937px;top:198px;width:1px;height:494px;background:#6a80b4"></div>
<div class="a" style="left:341px;top:675px;width:16px;height:13px;border:1px solid #3f9a3f;border-radius:2px;background:linear-gradient(90deg,#36b336 0,#36b336 50%,#a8e6a0 50%)"></div>
<div class="c" style="left:362px;top:674px"><span class="k">主分区</span></div>
<div class="a" style="left:492px;top:675px;width:16px;height:13px;border:1px solid #3a3aa8;border-radius:2px;background:linear-gradient(90deg,#4040c8 0,#4040c8 50%,#a8a8f0 50%)"></div>
<div class="c" style="left:513px;top:674px"><span class="k">逻辑分区</span></div>
<div class="a" style="left:643px;top:675px;width:16px;height:13px;border:1px solid #c8b8a8;border-radius:2px;background:#f0ece8"></div>
<div class="c" style="left:664px;top:674px"><span class="k">未分配空间</span></div>

</body></html>
